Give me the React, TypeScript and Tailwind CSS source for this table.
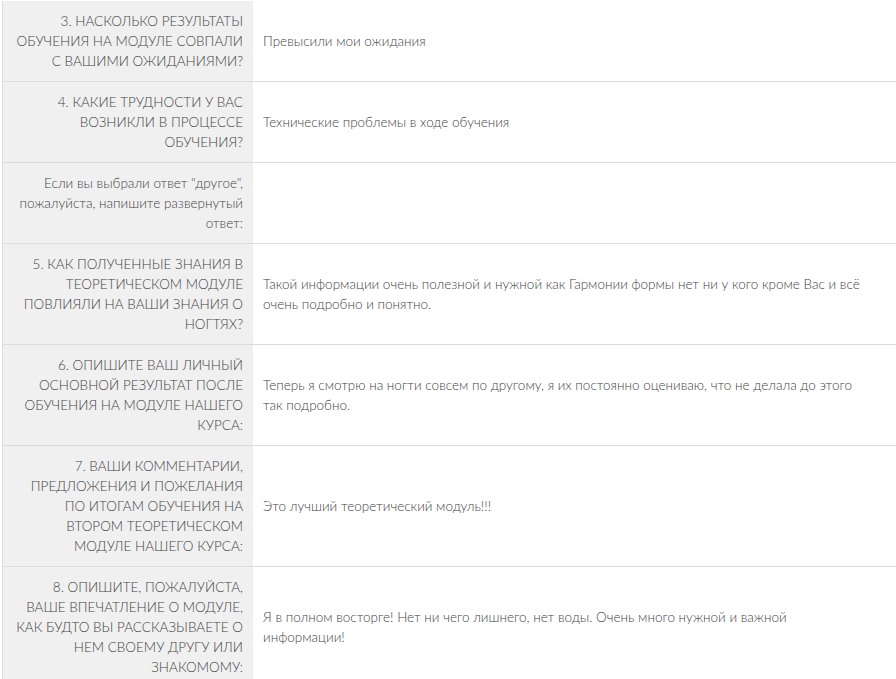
import React from "react";

const rows: { q: string[]; a: string[] }[] = [
  {
    q: ["3. НАСКОЛЬКО РЕЗУЛЬТАТЫ", "ОБУЧЕНИЯ НА МОДУЛЕ СОВПАЛИ", "С ВАШИМИ ОЖИДАНИЯМИ?"],
    a: ["Превысили мои ожидания"],
  },
  {
    q: ["4. КАКИЕ ТРУДНОСТИ У ВАС", "ВОЗНИКЛИ В ПРОЦЕССЕ", "ОБУЧЕНИЯ?"],
    a: ["Технические проблемы в ходе обучения"],
  },
  {
    q: ["Если вы выбрали ответ \"другое\",", "пожалуйста, напишите развернутый", "ответ:"],
    a: [],
  },
  {
    q: ["5. КАК ПОЛУЧЕННЫЕ ЗНАНИЯ В", "ТЕОРЕТИЧЕСКОМ МОДУЛЕ", "ПОВЛИЯЛИ НА ВАШИ ЗНАНИЯ О", "НОГТЯХ?"],
    a: [
      "Такой информации очень полезной и нужной как Гармонии формы нет ни у кого кроме Вас и всё",
      "очень подробно и понятно.",
    ],
  },
  {
    q: ["6. ОПИШИТЕ ВАШ ЛИЧНЫЙ", "ОСНОВНОЙ РЕЗУЛЬТАТ ПОСЛЕ", "ОБУЧЕНИЯ НА МОДУЛЕ НАШЕГО", "КУРСА:"],
    a: [
      "Теперь я смотрю на ногти совсем по другому, я их постоянно оцениваю, что не делала до этого",
      "так подробно.",
    ],
  },
  {
    q: [
      "7. ВАШИ КОММЕНТАРИИ,",
      "ПРЕДЛОЖЕНИЯ И ПОЖЕЛАНИЯ",
      "ПО ИТОГАМ ОБУЧЕНИЯ НА",
      "ВТОРОМ ТЕОРЕТИЧЕСКОМ",
      "МОДУЛЕ НАШЕГО КУРСА:",
    ],
    a: ["Это лучший теоретический модуль!!!"],
  },
  {
    q: [
      "8. ОПИШИТЕ, ПОЖАЛУЙСТА,",
      "ВАШЕ ВПЕЧАТЛЕНИЕ О МОДУЛЕ,",
      "КАК БУДТО ВЫ РАССКАЗЫВАЕТЕ О",
      "НЕМ СВОЕМУ ДРУГУ ИЛИ",
      "ЗНАКОМОМУ:",
    ],
    a: [
      "Я в полном восторге! Нет ни чего лишнего, нет воды. Очень много нужной и важной",
      "информации!",
    ],
  },
];

export default function App() {
  return (
    <div
      className="bg-white pl-[2px] pt-px text-[13.5px] font-light leading-[20px] text-[#444]"
      style={{ fontFamily: "Lato, 'Open Sans', sans-serif" }}
    >
      <div className="border-l border-[#dcdcdc]">
        {rows.map((r, i) => (
          <div key={i} className="flex border-b border-[#dcdcdc]">
            <div className="w-[250px] shrink-0 bg-[#f0f0f0] py-[10px] pr-[10px] text-right">
              {r.q.map((l, j) => (
                <div key={j} className="whitespace-nowrap">{l}</div>
              ))}
            </div>
            <div className="flex flex-1 flex-col justify-center py-[10px] pl-[10px]">
              {r.a.map((l, j) => (
                <div key={j} className="whitespace-nowrap">{l}</div>
              ))}
            </div>
          </div>
        ))}
      </div>
    </div>
  );
}
